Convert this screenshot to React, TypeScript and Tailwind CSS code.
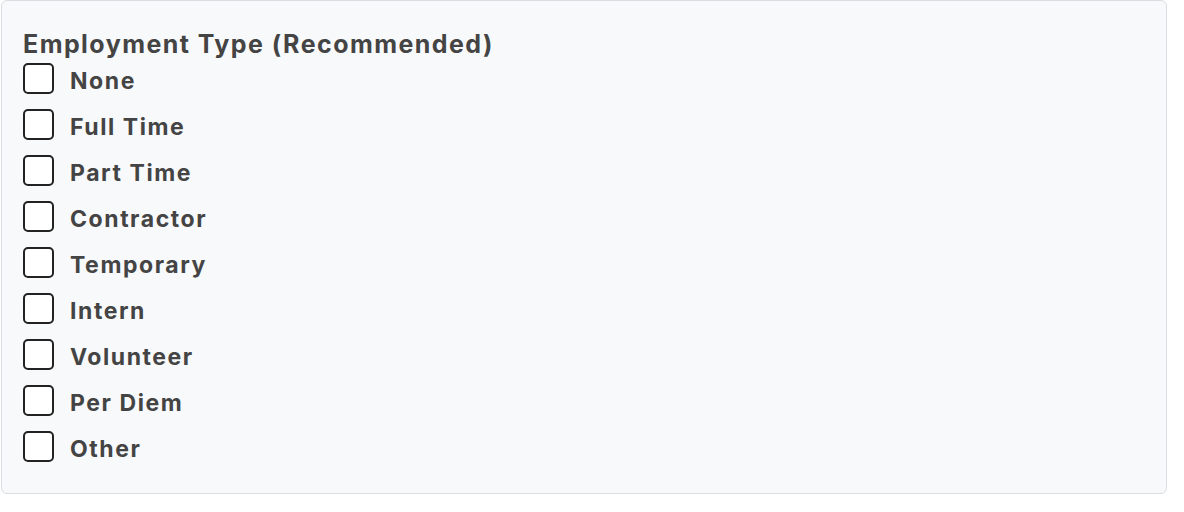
const options = [
  "None",
  "Full Time",
  "Part Time",
  "Contractor",
  "Temporary",
  "Intern",
  "Volunteer",
  "Per Diem",
  "Other",
];

const App = () => {
  return (
    <div className="w-[1184px] h-[512px] bg-white font-['Inter',sans-serif]">
      <div className="ml-px w-[1166px] h-[494px] bg-[#f8f9fa] border border-[#dadde1] rounded-md pl-[21px] pt-[27px]">
        <h2 className="text-[25px] leading-[32px] font-bold tracking-[0.058em] text-[#444444]">
          Employment Type (Recommended)
        </h2>
        <div className="flex flex-col gap-[15px] mt-[3px]">
          {options.map((opt) => (
            <label key={opt} className="flex flex-row items-center h-[31px]">
              <input type="checkbox" className="appearance-none w-[31px] h-[31px] bg-white border-2 border-[#222222] rounded-[5px]" />
              <span className="ml-[16px] mt-[6px] text-[23px] font-bold tracking-[0.068em] text-[#444444]">{opt}</span>
            </label>
          ))}
        </div>
      </div>
    </div>
  );
};

export default App;
